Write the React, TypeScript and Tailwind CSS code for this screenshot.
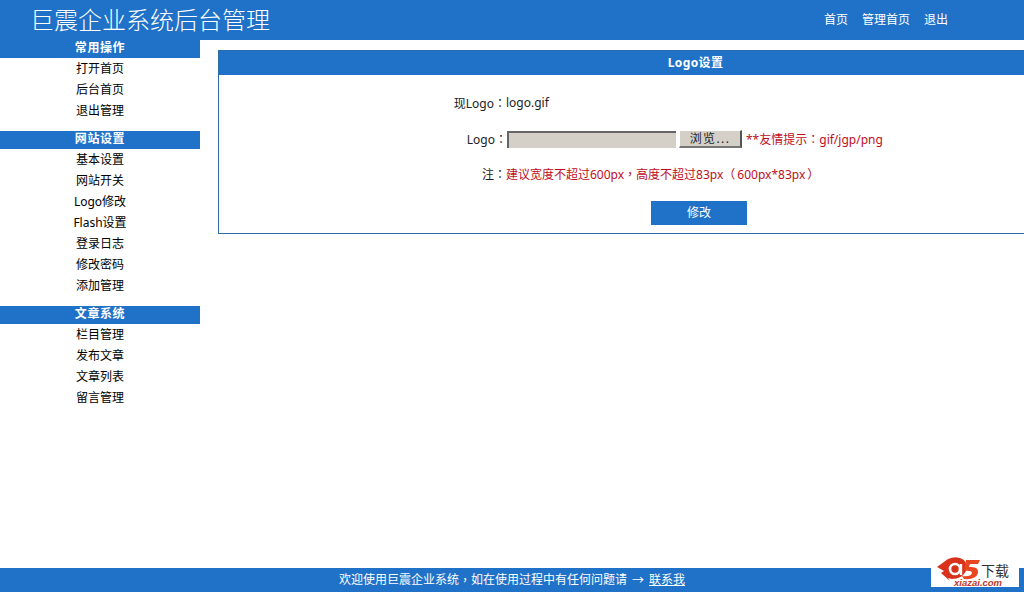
const font = "font-['Noto_Sans','Noto_Sans_CJK_SC',sans-serif]";

const menus = [
  { title: "常用操作", items: ["打开首页", "后台首页", "退出管理"] },
  {
    title: "网站设置",
    items: ["基本设置", "网站开关", "Logo修改", "Flash设置", "登录日志", "修改密码", "添加管理"],
  },
  { title: "文章系统", items: ["栏目管理", "发布文章", "文章列表", "留言管理"] },
];

// the reference centres its full-width punctuation, as the TC cut of the font does
const Punct = ({ children }: { children: string }) => (
  <span className="font-['Noto_Sans_CJK_TC',sans-serif]">{children}</span>
);

const Sidebar = () => (
  <aside className="w-[200px] shrink-0">
    {menus.map((menu) => (
      <div key={menu.title} className="mb-[10px]">
        <div className="h-[18px] bg-[#1f72c8] text-center text-[12px] leading-[16px] font-bold tracking-[0.6px] text-white">
          {menu.title}
        </div>
        {menu.items.map((item) => (
          <div key={item} className="h-[21px] text-center text-[12px] leading-[21px] text-black">
            {item}
          </div>
        ))}
      </div>
    ))}
  </aside>
);

const LogoForm = () => (
  <div className="mt-[10px] ml-[18px] h-[184px] flex-1 border border-r-0 border-[#2a6da8]">
    <div className="h-[24px] bg-[#1f72c8] pl-[148px] text-center text-[12px] leading-[23px] font-bold tracking-[0.4px] text-white">
      Logo设置
    </div>
    <div className="mt-[17px] flex h-[22px] items-center text-[12px] text-[#222]">
      <div className="w-[287px] text-right">
        现Logo<Punct>：</Punct>
      </div>
      <div>logo.gif</div>
    </div>
    <div className="mt-[14px] flex h-[22px] items-center text-[12px]">
      <div className="w-[288px] text-right text-[#222]">
        Logo<Punct>：</Punct>
      </div>
      <div className="h-[17px] w-[169px] border-t-2 border-l-2 border-t-[#666] border-l-[#666] bg-[#d4d0c8]" />
      <button className="mr-[4px] ml-[3px] h-[18px] w-[63px] border-t border-l border-r-2 border-b-2 border-t-white border-l-white border-r-[#555] border-b-[#777] bg-[#d4d0c8] text-[12px] leading-[15px] tracking-[1.4px] text-[#222]">
        浏览...
      </button>
      <span className="text-[#c00d1e]">
        **友情提示<Punct>：</Punct>gif/jgp/png
      </span>
    </div>
    <div className="mt-[13px] flex h-[22px] items-center text-[12px]">
      <div className="w-[287px] text-right text-[#222]">
        注<Punct>：</Punct>
      </div>
      <span className="text-[#c00d1e]">
        建议宽度不超过600px<Punct>，</Punct>高度不超过83px<Punct>（</Punct>
        <span className="mx-[2px]">600px*83px</span>
        <Punct>）</Punct>
      </span>
    </div>
    <div className="mt-[16px] flex pl-[432px]">
      <button className="h-[24px] w-[96px] bg-[#1f72c8] text-[12px] text-white">修改</button>
    </div>
  </div>
);

const A5Logo = () => (
  <div className="absolute right-[5px] bottom-[5px] h-[31px] w-[88px] bg-white">
    <svg viewBox="0 0 52 26" className="absolute top-0 left-0 h-[26px] w-[52px]">
      <path d="M6 11 L17 3 Q26 -1 33 4 Q37 9 35 15 Q31 23 21 23 L17 22 L19 25 L10 17 L13 15 Z" fill="#d8321c" />
      <circle cx="24" cy="13" r="5" fill="none" stroke="#fff" strokeWidth="2.6" />
      <path d="M30 8 L30 19" stroke="#fff" strokeWidth="2.4" />
      <path d="M35 4 H49 L47 8 H39 L38 11 Q48 10 47 17 Q45 24 33 23 L31 20 Q40 21 41 17 Q41 14 33 15 Z" fill="#e8461e" />
    </svg>
    <span className="absolute top-[23px] left-[23px] font-['Liberation_Sans',sans-serif] text-[9.5px] leading-[8px] font-bold whitespace-nowrap text-[#c0392b] italic">
      xiazai.com
    </span>
    <span className="absolute top-[7px] left-[50px] text-[14px] leading-[15px] whitespace-nowrap text-[#333]">下载</span>
  </div>
);

export default function App() {
  return (
    <div className={`relative flex h-[592px] w-[1024px] flex-col overflow-hidden bg-white ${font}`}>
      <header className="flex h-[40px] shrink-0 items-center bg-[#1f72c8] text-white">
        <h1 className="ml-[30px] text-[24px] leading-[38px] font-light">巨震企业系统后台管理</h1>
        <nav className="ml-auto mr-[76px] flex gap-[14px] text-[12px]">
          <a>首页</a>
          <a>管理首页</a>
          <a>退出</a>
        </nav>
      </header>
      <main className="flex flex-1">
        <Sidebar />
        <LogoForm />
      </main>
      <footer className="flex h-[24px] shrink-0 items-center justify-center bg-[#1f72c8] text-[12px] text-white">
        欢迎使用巨震企业系统<Punct>，</Punct>如在使用过程中有任何问题请
        <span className="mx-[5px] font-['Noto_Sans_CJK_SC',sans-serif]">→</span>
        <a className="underline">联系我</a>
      </footer>
      <A5Logo />
    </div>
  );
}
